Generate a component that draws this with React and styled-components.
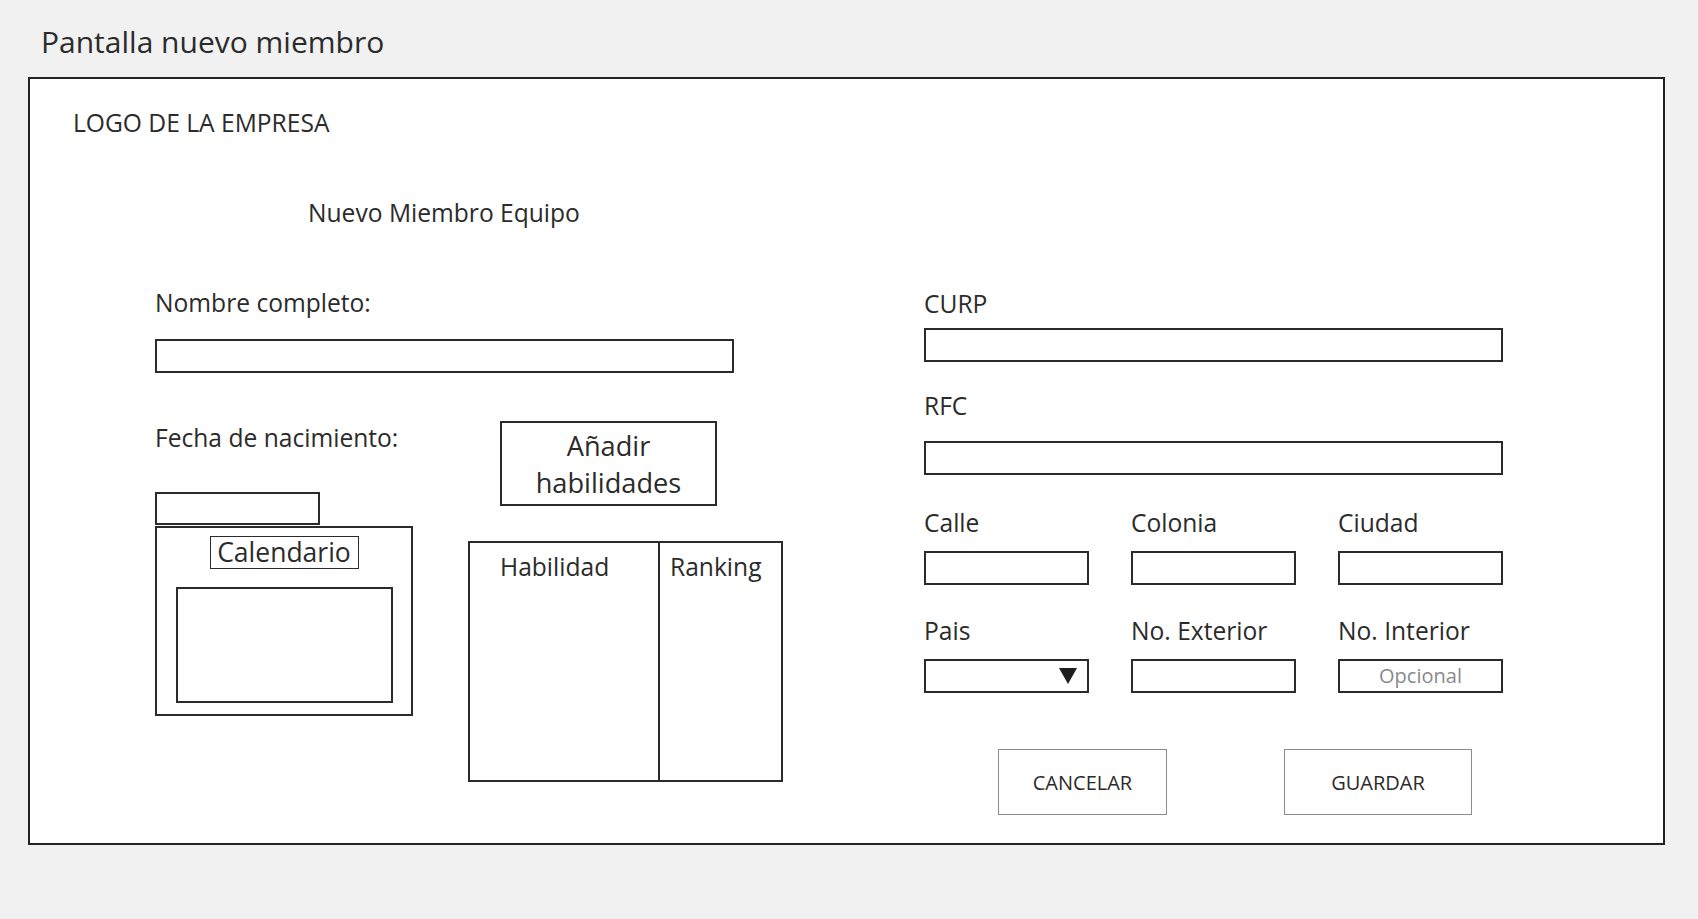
import React from "react";
import styled, { createGlobalStyle } from "styled-components";

const GlobalStyle = createGlobalStyle`
  html, body {
    margin: 0;
    padding: 0;
    background: #f1f1f1;
  }
  body {
    font-family: "Open Sans", "Noto Sans", sans-serif;
    color: #2b2b2b;
  }
  * { box-sizing: border-box; }
`;

const Page = styled.div`
  padding: 28px 33px 0 28px;
  min-height: 919px;
`;

const Title = styled.h1`
  margin: 0 0 21px 13px;
  font-size: 30px;
  line-height: 28px;
  font-weight: 400;
`;

const Frame = styled.div`
  height: 768px;
  border: 2px solid #232323;
  background: #fff;
  padding: 32px 0 0 43px;
  display: flex;
  flex-direction: column;
`;

const Text = styled.div`
  font-size: ${(p) => p.$size || 24.6}px;
  line-height: 24px;
  margin-top: ${(p) => p.$mt || 0}px;
  margin-left: ${(p) => p.$ml || 0}px;
  white-space: nowrap;
`;

const Columns = styled.div`
  display: flex;
  margin-top: 66px;
  padding-left: 82px;
`;

const LeftCol = styled.div`
  width: 628px;
  display: flex;
  flex-direction: column;
`;

const RightCol = styled.div`
  width: 579px;
  margin-left: 141px;
  padding-top: 1px;
  display: flex;
  flex-direction: column;
`;

const Input = styled.div`
  width: ${(p) => (p.$w ? `${p.$w}px` : "100%")};
  height: ${(p) => p.$h || 34}px;
  margin-top: ${(p) => p.$mt || 0}px;
  border: 2px solid #2b2b2b;
  background: #fff;
  display: flex;
  align-items: center;
  justify-content: center;
  position: relative;
`;

const Placeholder = styled.span`
  font-size: 20px;
  color: #8a8a8a;
  line-height: 1;
`;

const Arrow = styled.svg`
  position: absolute;
  right: 10px;
  top: 7px;
`;

const FormRow = styled.div`
  display: flex;
  margin-top: 48px;
`;

const DateCol = styled.div`
  width: 258px;
  display: flex;
  flex-direction: column;
`;

const Calendar = styled.div`
  width: 258px;
  height: 190px;
  margin-top: 1px;
  border: 2px solid #2b2b2b;
  padding-top: 8px;
  display: flex;
  flex-direction: column;
  align-items: center;
`;

const CalLabel = styled.div`
  width: 149px;
  height: 33px;
  border: 1.5px solid #2b2b2b;
  font-size: 26.5px;
  line-height: 1;
  display: flex;
  align-items: center;
  justify-content: center;
`;

const CalBody = styled.div`
  width: 217px;
  height: 116px;
  margin-top: 18px;
  border: 2px solid #2b2b2b;
`;

const SkillCol = styled.div`
  margin-left: 55px;
  display: flex;
  flex-direction: column;
`;

const AddButton = styled.div`
  width: 217px;
  height: 85px;
  margin-left: 32px;
  border: 2px solid #2b2b2b;
  font-size: 27.2px;
  line-height: 37px;
  text-align: center;
  display: flex;
  align-items: center;
  justify-content: center;
`;

const Table = styled.div`
  width: 315px;
  height: 241px;
  margin-top: 35px;
  border: 2px solid #2b2b2b;
  display: grid;
  grid-template-columns: 188px 1fr;
`;

const HeadCell = styled.div`
  padding-top: 12px;
  padding-left: ${(p) => p.$pl}px;
  font-size: 24.6px;
  line-height: 24px;
  white-space: nowrap;
  border-left: ${(p) => (p.$divider ? "2px solid #2b2b2b" : "none")};
`;

const Grid = styled.div`
  display: grid;
  grid-template-columns: repeat(3, 165px);
  column-gap: 42px;
  row-gap: 34px;
  margin-top: 36px;
`;

const Field = styled.div`
  display: flex;
  flex-direction: column;
  gap: 16px;
`;

const ButtonRow = styled.div`
  display: flex;
  gap: 117px;
  margin-top: 56px;
  padding-left: 74px;
`;

const ActionButton = styled.div`
  width: ${(p) => p.$w}px;
  height: 66px;
  border: 1.5px solid #8c8c8c;
  background: #fff;
  font-size: 20px;
  display: flex;
  align-items: center;
  justify-content: center;
  color: #2b2b2b;
`;

export default function App() {
  return (
    <>
      <GlobalStyle />
      <Page>
        <Title>Pantalla nuevo miembro</Title>
        <Frame>
          <Text>LOGO DE LA EMPRESA</Text>
          <Text $mt={66} $ml={235}>Nuevo Miembro Equipo</Text>
          <Columns>
            <LeftCol>
              <Text>Nombre completo:</Text>
              <Input $w={579} $mt={24} />
              <FormRow>
                <DateCol>
                  <Text $mt={5}>Fecha de nacimiento:</Text>
                  <Input $w={165} $h={33} $mt={42} />
                  <Calendar>
                    <CalLabel>Calendario</CalLabel>
                    <CalBody />
                  </Calendar>
                </DateCol>
                <SkillCol>
                  <AddButton>
                    Añadir
                    <br />
                    habilidades
                  </AddButton>
                  <Table>
                    <HeadCell $pl={30}>Habilidad</HeadCell>
                    <HeadCell $pl={10} $divider>
                      Ranking
                    </HeadCell>
                  </Table>
                </SkillCol>
              </FormRow>
            </LeftCol>
            <RightCol>
              <Text>CURP</Text>
              <Input $mt={12} />
              <Text $mt={32}>RFC</Text>
              <Input $mt={23} />
              <Grid>
                <Field>
                  <Text>Calle</Text>
                  <Input />
                </Field>
                <Field>
                  <Text>Colonia</Text>
                  <Input />
                </Field>
                <Field>
                  <Text>Ciudad</Text>
                  <Input />
                </Field>
                <Field>
                  <Text>Pais</Text>
                  <Input>
                    <Arrow width="18" height="16" viewBox="0 0 18 16">
                      <polygon points="0,0 18,0 9,16" fill="#1e1e1e" />
                    </Arrow>
                  </Input>
                </Field>
                <Field>
                  <Text>No. Exterior</Text>
                  <Input />
                </Field>
                <Field>
                  <Text>No. Interior</Text>
                  <Input>
                    <Placeholder>Opcional</Placeholder>
                  </Input>
                </Field>
              </Grid>
              <ButtonRow>
                <ActionButton $w={169}>CANCELAR</ActionButton>
                <ActionButton $w={188}>GUARDAR</ActionButton>
              </ButtonRow>
            </RightCol>
          </Columns>
        </Frame>
      </Page>
    </>
  );
}
